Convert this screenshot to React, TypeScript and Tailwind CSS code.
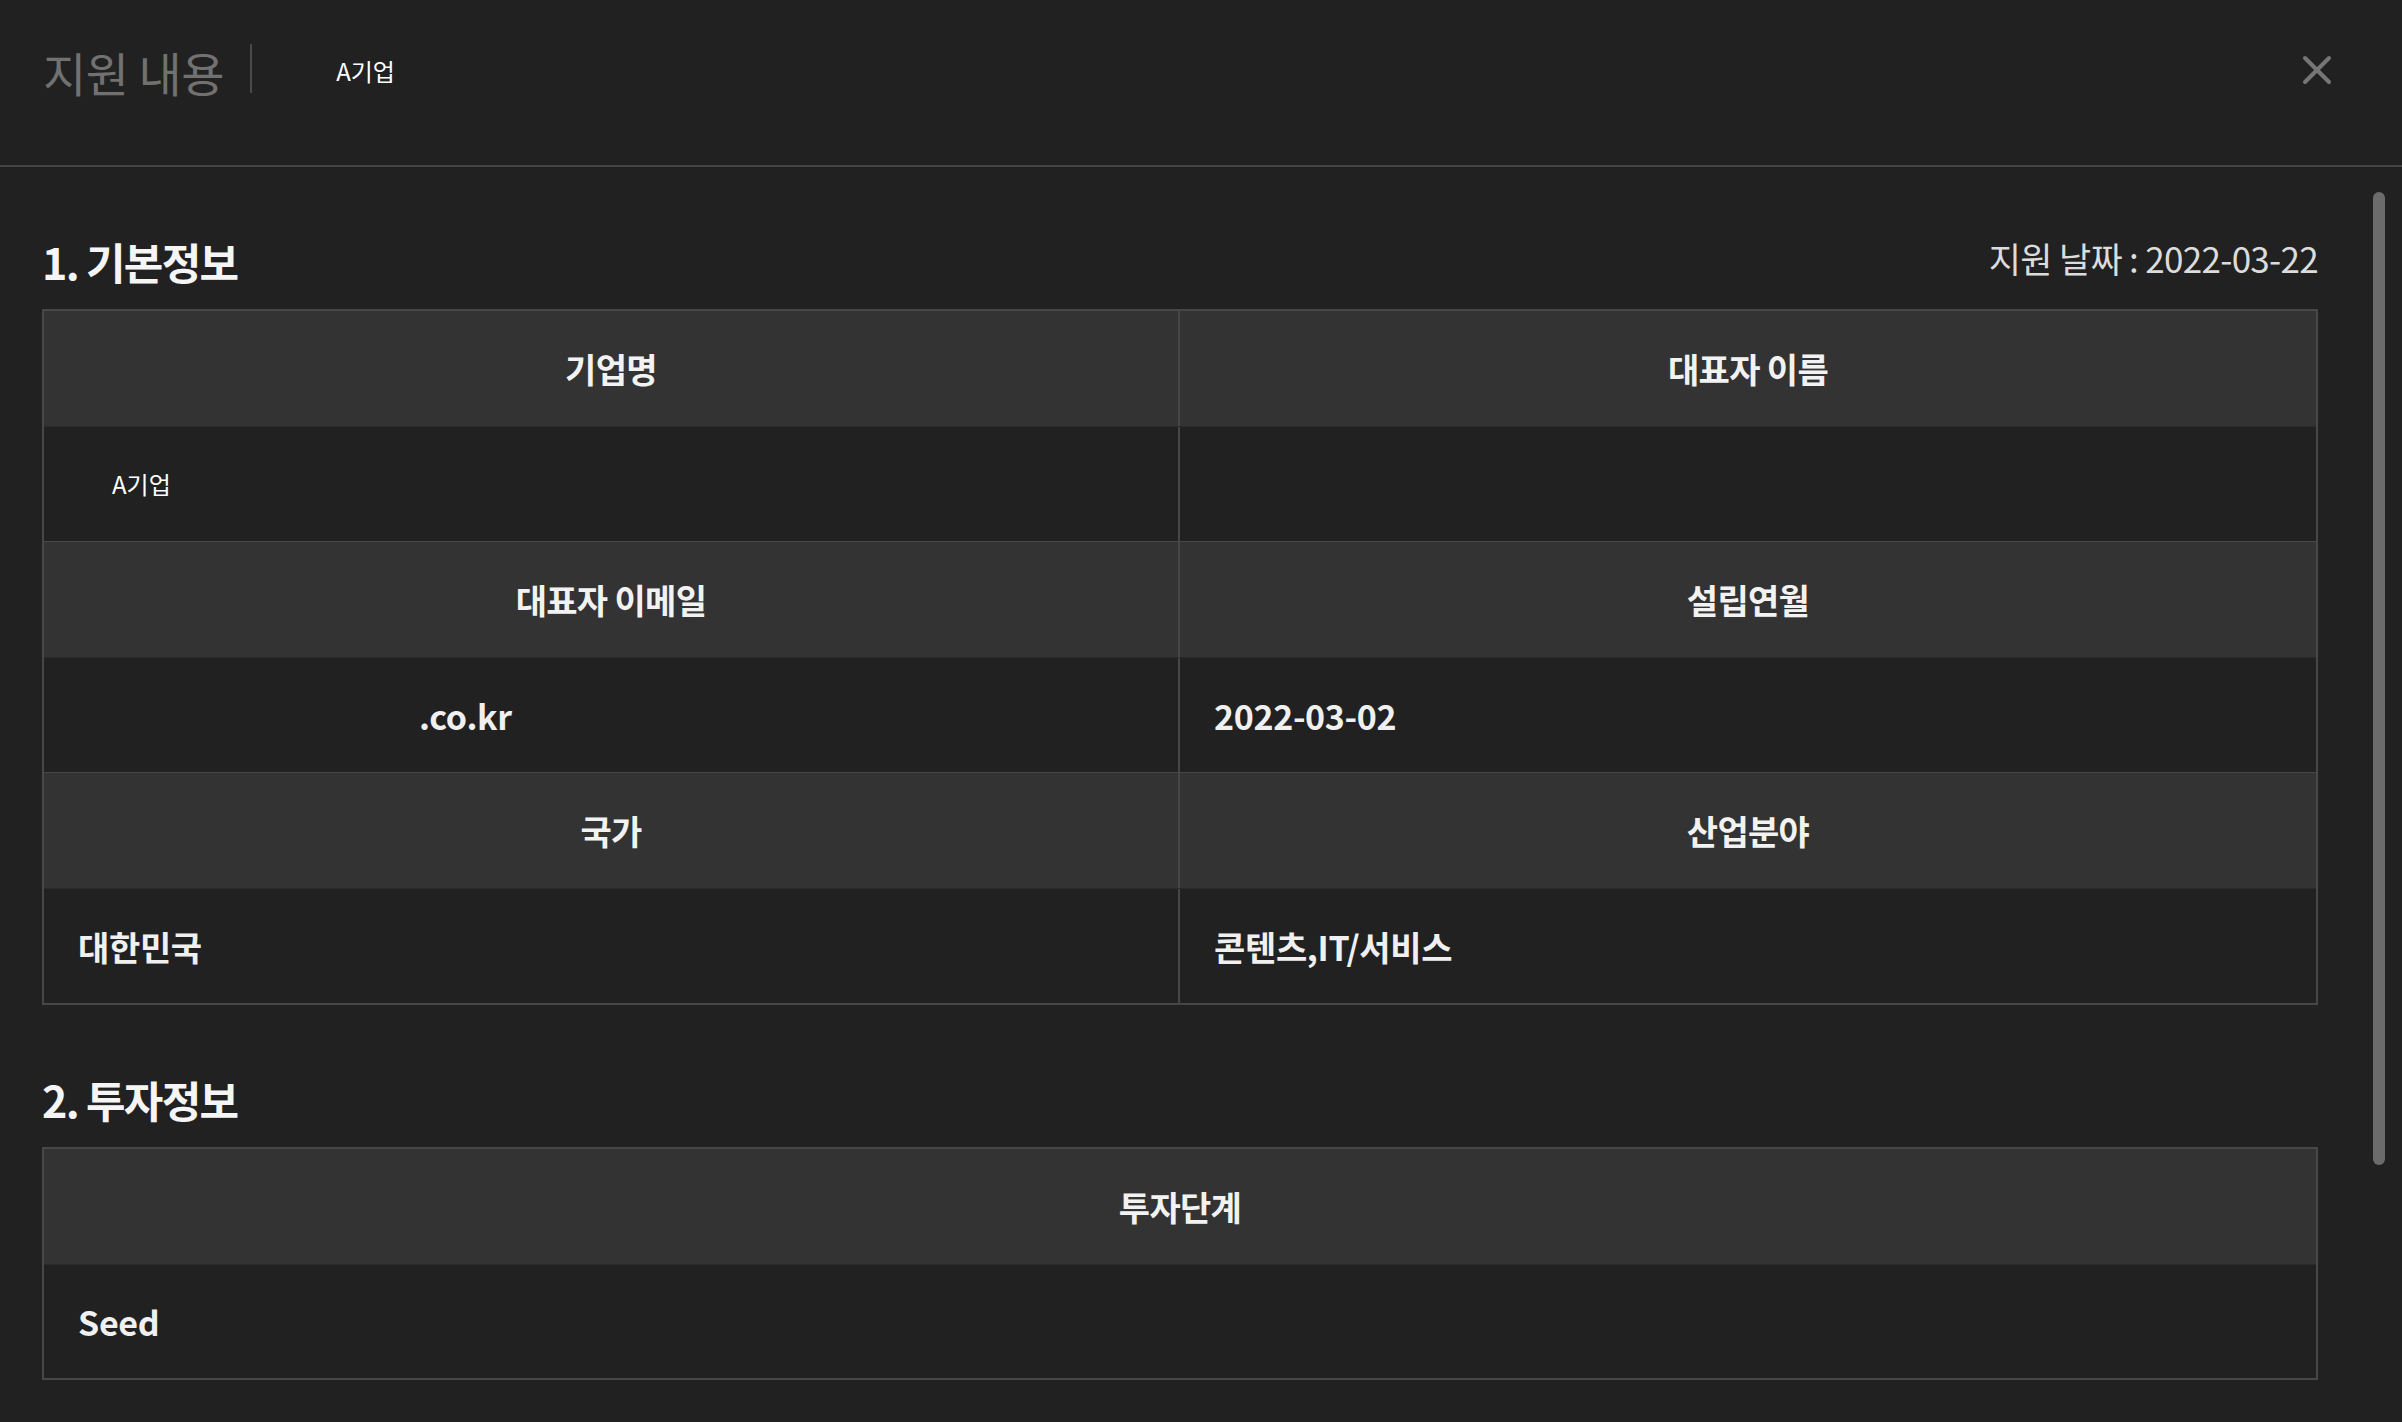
import React from "react";

const FONT = { fontFamily: '"Noto Sans CJK KR", "Noto Sans", sans-serif' };

function HeadCell({ children, right }: { children?: React.ReactNode; right?: boolean }) {
  return (
    <div
      className={`h-[115px] bg-[#333333] flex items-center justify-center text-[34px] font-bold tracking-[-0.02em] text-[#f2f2f2] ${
        right ? "" : "border-r-2 border-[#474747]"
      }`}
    >
      {children}
    </div>
  );
}

function DataCell({
  children,
  right,
  pad = "pl-[34px]",
}: {
  children?: React.ReactNode;
  right?: boolean;
  pad?: string;
}) {
  return (
    <div
      className={`h-[114px] bg-[#212121] flex items-center ${pad} text-[34px] font-semibold tracking-[-0.01em] text-[#f0f0f0] ${
        right ? "" : "border-r-2 border-[#474747]"
      }`}
    >
      {children}
    </div>
  );
}

function SectionTitle({ title, right }: { title: string; right?: React.ReactNode }) {
  return (
    <div className="h-[62px] flex items-start justify-between mb-[11px] pt-[4px]">
      <div className="text-[43px] font-bold tracking-[-0.04em] text-[#f5f5f5] leading-none">{title}</div>
      {right}
    </div>
  );
}

export default function App() {
  return (
    <div className="w-[2402px] h-[1422px] bg-[#212121] flex flex-col overflow-hidden" style={FONT}>
      {/* Header */}
      <div className="h-[167px] shrink-0 border-b-2 border-[#444444]">
        <div className="h-[142px] flex items-center pl-[43px] pr-[70px]">
          <div className="text-[47px] leading-none text-[#717171] tracking-[-0.01em]">지원 내용</div>
          <div className="ml-[26px] w-[2px] h-[49px] bg-[#4a4a4a] -mt-[6px]" />
          <div className="ml-[84px] text-[24px] leading-none text-white">A기업</div>
          <div className="flex-1" />
          <svg width="30" height="30" viewBox="0 0 30 30" className="mt-[-2px]">
            <line x1="3" y1="3" x2="27" y2="27" stroke="#767676" strokeWidth="4" strokeLinecap="round" />
            <line x1="27" y1="3" x2="3" y2="27" stroke="#767676" strokeWidth="4" strokeLinecap="round" />
          </svg>
        </div>
      </div>

      {/* Body */}
      <div className="flex-1 flex min-h-0">
        <div className="ml-[42px] w-[2276px] pt-[69px]">
          <SectionTitle
            title="1. 기본정보"
            right={<div className="text-[35px] leading-none text-[#dcdcdc] tracking-[-0.02em]">지원 날짜 : 2022-03-22</div>}
          />
          <div className="border-2 border-[#474747]">
            <div className="grid grid-cols-2">
              <HeadCell>기업명</HeadCell>
              <HeadCell right>대표자 이름</HeadCell>
            </div>
            <div className="grid grid-cols-2 border-t border-[#2a2a2a]">
              <DataCell pad="pl-[68px]">
                <span className="text-[24px] font-normal text-white tracking-normal">A기업</span>
              </DataCell>
              <DataCell right />
            </div>
            <div className="grid grid-cols-2 border-t border-[#474747]">
              <HeadCell>대표자 이메일</HeadCell>
              <HeadCell right>설립연월</HeadCell>
            </div>
            <div className="grid grid-cols-2 border-t border-[#2a2a2a]">
              <DataCell pad="pl-[375px]">.co.kr</DataCell>
              <DataCell right>2022-03-02</DataCell>
            </div>
            <div className="grid grid-cols-2 border-t border-[#474747]">
              <HeadCell>국가</HeadCell>
              <HeadCell right>산업분야</HeadCell>
            </div>
            <div className="grid grid-cols-2 border-t border-[#2a2a2a]">
              <DataCell>대한민국</DataCell>
              <DataCell right>콘텐츠,IT/서비스</DataCell>
            </div>
          </div>

          <div className="mt-[69px]">
            <SectionTitle title="2. 투자정보" />
            <div className="border-2 border-[#474747]">
              <div className="h-[115px] bg-[#333333] flex items-center justify-center text-[34px] font-bold tracking-[-0.02em] text-[#f2f2f2]">
                투자단계
              </div>
              <div className="h-[114px] bg-[#212121] border-t border-[#2a2a2a] flex items-center pl-[34px] text-[34px] font-semibold tracking-[-0.01em] text-[#f0f0f0]">
                Seed
              </div>
            </div>
          </div>
        </div>

        {/* Scrollbar */}
        <div className="ml-[55px] mt-[25px] w-[12px] h-[973px] rounded-full bg-[#6b6b6b]" />
      </div>
    </div>
  );
}
